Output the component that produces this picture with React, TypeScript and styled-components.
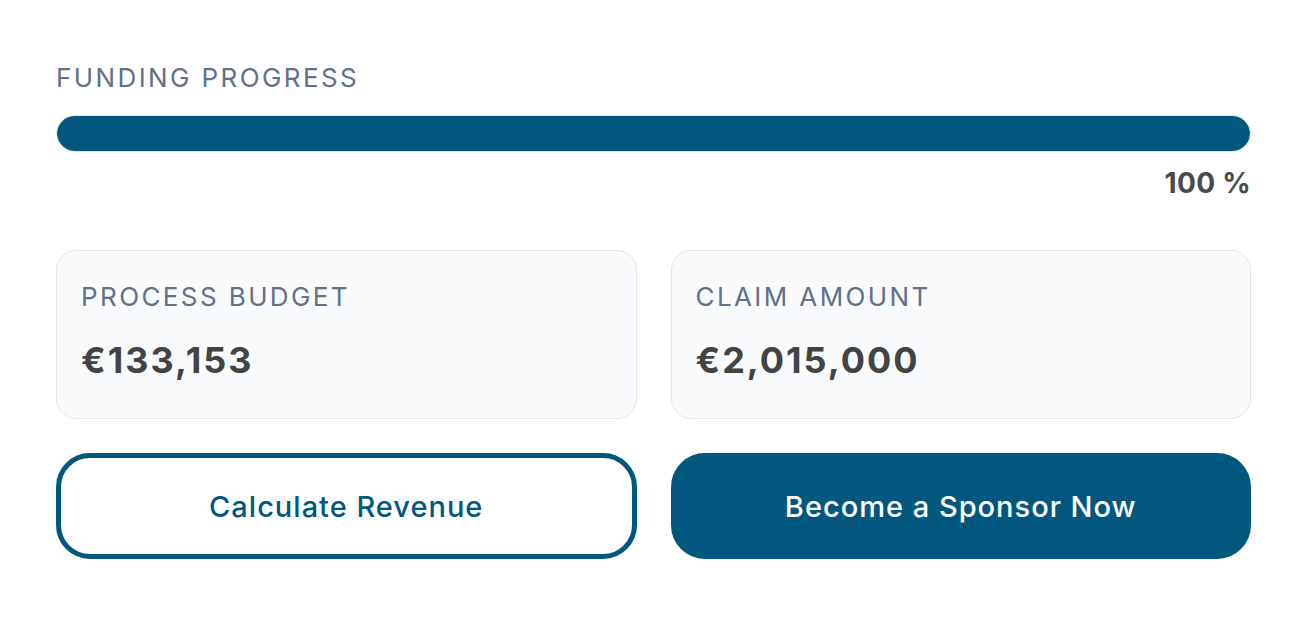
import React from "react";
import styled, { createGlobalStyle } from "styled-components";

const Global = createGlobalStyle`
  html, body { margin: 0; padding: 0; background: #ffffff; }
  body { font-family: Inter, "Noto Sans", "Liberation Sans", sans-serif; -webkit-font-smoothing: antialiased; }
  * { box-sizing: border-box; }
`;

const Page = styled.div`
  width: 1308px;
  padding: 62px 57px 0 56px;
  display: flex;
  flex-direction: column;
`;

const SectionLabel = styled.div`
  font-size: 26px;
  line-height: 32px;
  letter-spacing: 2.4px;
  color: #627089;
  font-weight: 400;
  text-transform: uppercase;
`;

const Track = styled.div`
  margin-top: 21px;
  height: 37px;
  border-radius: 999px;
  background: #e7edf3;
  border: 1px solid #dfe8f0;
  overflow: hidden;
`;

const Fill = styled.div`
  height: 100%;
  background: #02577e;
  border-radius: 999px;
`;

const Percent = styled.div`
  margin-top: 15px;
  align-self: flex-end;
  font-size: 28px;
  line-height: 32px;
  font-weight: 700;
  color: #4a4a4a;
  letter-spacing: 0.3px;
`;

const Grid = styled.div<{ $top: number }>`
  display: grid;
  grid-template-columns: 1fr 1fr;
  column-gap: 34px;
  margin-top: ${(p) => p.$top}px;
`;

const Card = styled.div`
  height: 169px;
  border-radius: 20px;
  background: #f8fafc;
  border: 1.5px solid #e1e6ec;
  padding: 30px 24px 0 24px;
  display: flex;
  flex-direction: column;
`;

const CardLabel = styled.div`
  font-size: 26px;
  line-height: 32px;
  letter-spacing: 2.4px;
  color: #627089;
  text-transform: uppercase;
`;

const CardValue = styled.div`
  margin-top: 25px;
  font-size: 36px;
  line-height: 44px;
  font-weight: 700;
  color: #434343;
  letter-spacing: 2px;
`;

const Button = styled.button<{ $primary?: boolean }>`
  height: 106px;
  border-radius: 34px;
  font-family: inherit;
  font-size: 29px;
  font-weight: 500;
  letter-spacing: 1px;
  cursor: pointer;
  border: 5px solid #02577e;
  background: ${(p) => (p.$primary ? "#02577e" : "#ffffff")};
  color: ${(p) => (p.$primary ? "#ffffff" : "#02577e")};
  display: flex;
  align-items: center;
  justify-content: center;
`;

export default function App() {
  const progress = 100;
  return (
    <>
      <Global />
      <Page>
        <SectionLabel>Funding Progress</SectionLabel>
        <Track>
          <Fill style={{ width: `${progress}%` }} />
        </Track>
        <Percent>{progress} %</Percent>
        <Grid $top={51}>
          <Card>
            <CardLabel>Process Budget</CardLabel>
            <CardValue>€133,153</CardValue>
          </Card>
          <Card>
            <CardLabel>Claim Amount</CardLabel>
            <CardValue>€2,015,000</CardValue>
          </Card>
        </Grid>
        <Grid $top={34}>
          <Button>Calculate Revenue</Button>
          <Button $primary>Become a Sponsor Now</Button>
        </Grid>
      </Page>
    </>
  );
}
